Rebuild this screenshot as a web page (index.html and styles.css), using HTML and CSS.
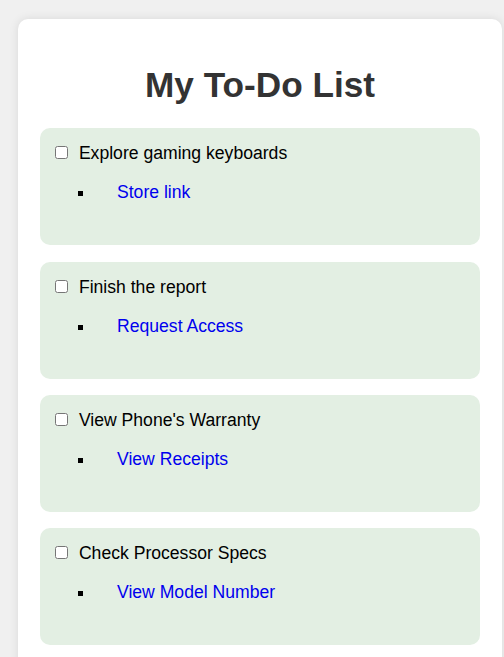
FILE: index.html
```html
<!DOCTYPE html>
<html>
<head>
<meta charset="utf-8">
<link rel="stylesheet" href="styles.css">
</head>
<body>
<div class="card">
  <h1 class="title">My To-Do List</h1>
  <div class="item">
    <label class="task"><input type="checkbox" class="check"> Explore gaming keyboards</label>
    <ul class="links"><li><a class="link" href="#">Store link</a></li></ul>
  </div>
  <div class="item">
    <label class="task"><input type="checkbox" class="check"> Finish the report</label>
    <ul class="links"><li><a class="link" href="#">Request Access</a></li></ul>
  </div>
  <div class="item">
    <label class="task"><input type="checkbox" class="check"> View Phone's Warranty</label>
    <ul class="links"><li><a class="link" href="#">View Receipts</a></li></ul>
  </div>
  <div class="item">
    <label class="task"><input type="checkbox" class="check"> Check Processor Specs</label>
    <ul class="links"><li><a class="link" href="#">View Model Number</a></li></ul>
  </div>
</div>
</body>
</html>
```

FILE: styles.css
```css
html, body {
  margin: 0;
  padding: 0;
}
body {
  background: #f0f0f0;
  font-family: "Liberation Sans", Arial, sans-serif;
  overflow: hidden;
}
.card {
  box-sizing: border-box;
  width: 484px;
  margin: 19px 0 0 18px;
  padding: 22px 22px 10px;
  background: #ffffff;
  border-radius: 10px;
  box-shadow: 0 0 10px rgba(0, 0, 0, 0.1);
}
.title {
  font-size: 35.2px;
  margin: 23.6px 0;
  text-align: center;
  color: #333333;
}
.item {
  background: #e3efe3;
  border-radius: 10px;
  padding: 15px;
  margin-bottom: 16.4px;
  font-size: 17.6px;
  color: #000;
}
.task {
  display: block;
}
.check {
  margin: 3px 6px 3px 0;
}
.links {
  list-style: square;
  margin: 18px 0 27px;
  padding-left: 40px;
}
.link {
  color: #0000ee;
  text-decoration: none;
  margin-left: 22px;
}
```
